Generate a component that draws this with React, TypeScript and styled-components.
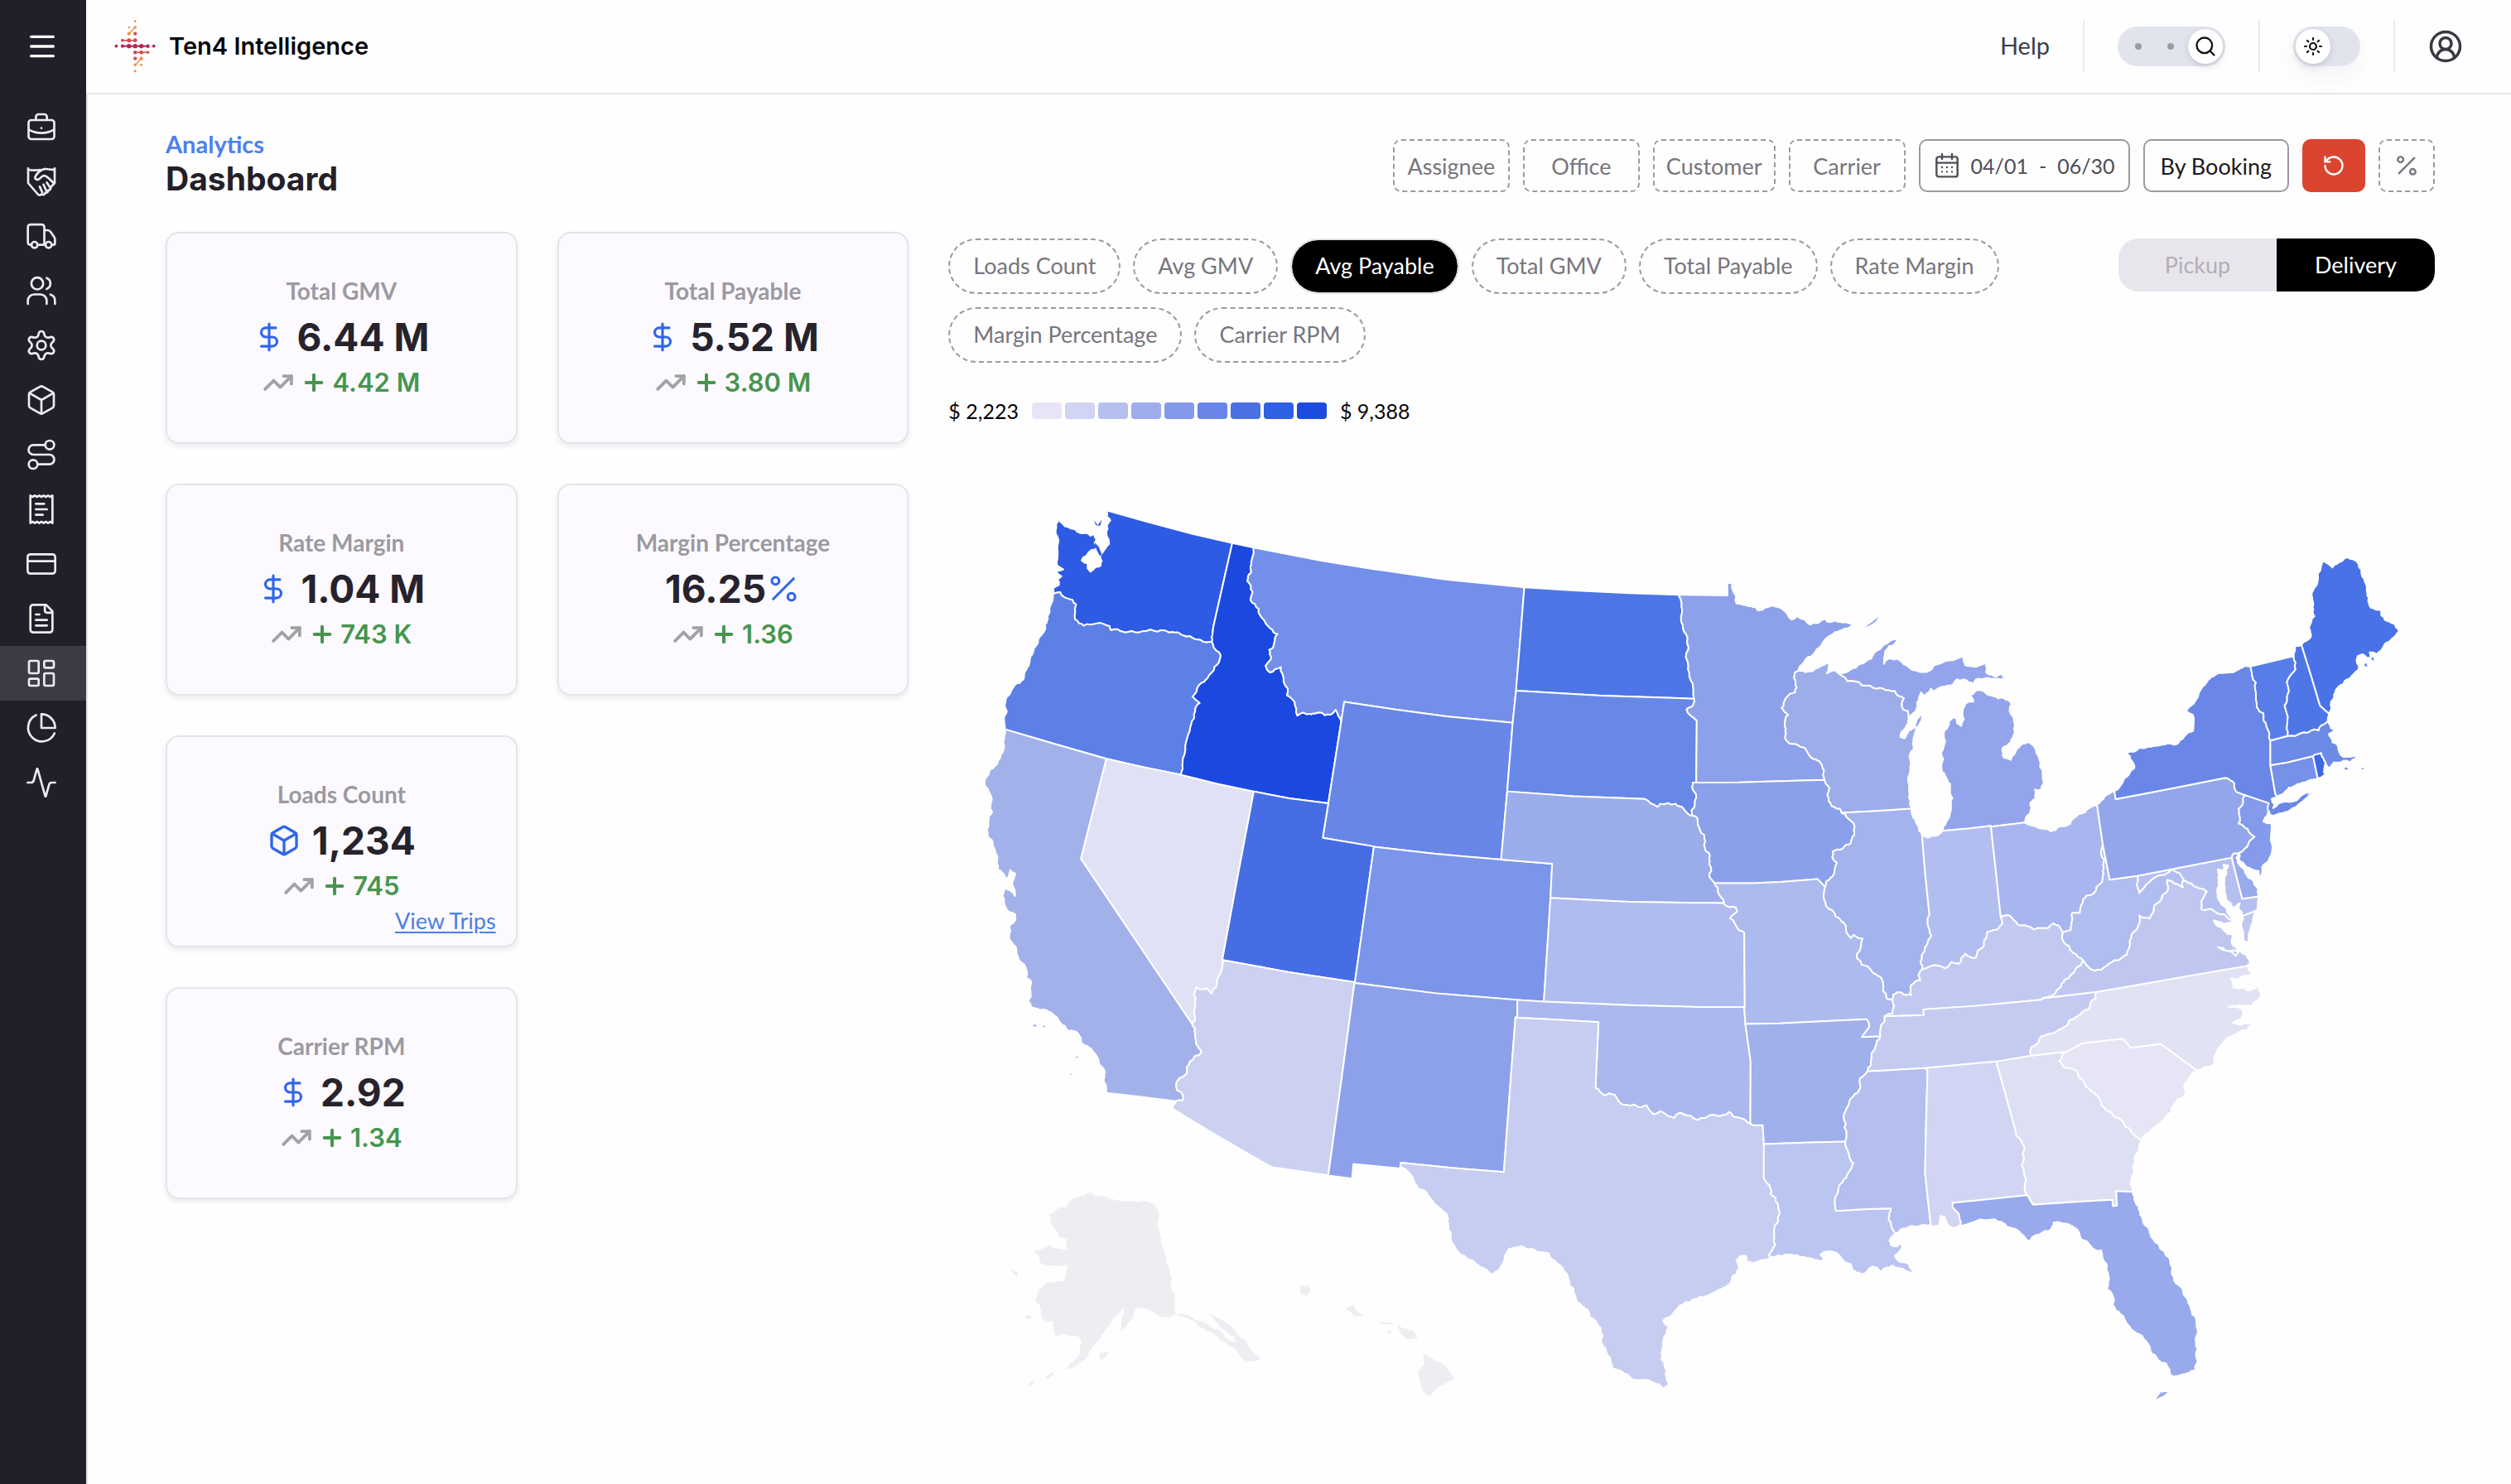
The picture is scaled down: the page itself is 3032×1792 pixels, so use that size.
import React, { useState } from "react";
import styled, { createGlobalStyle, css } from "styled-components";
import { Activity, Box, CircleUserRound, CreditCard, DollarSign, LayoutDashboard, Menu, Percent, Plus, RotateCcw, Search, Sun, TrendingUp } from "lucide-react";

const ui = `Lato, "Noto Sans", sans-serif`;
const display = `Inter, "Liberation Sans", sans-serif`;

const GlobalStyle = createGlobalStyle`
  * { box-sizing: border-box; }
  body { margin: 0; background: #fefefe; color: #232029; font-family: ${ui}; font-size: 27px; }
  button { font: inherit; color: inherit; cursor: pointer; background: none; border: 0; padding: 0; }
  svg { display: block; flex-shrink: 0; }
`;

/* ---------- shell ---------- */

const Page = styled.div`
  display: flex;
  min-height: 100vh;
`;

const Sidebar = styled.nav`
  width: 104px;
  flex-shrink: 0;
  background: #211f2a;
  color: #eceaf4;
  display: flex;
  flex-direction: column;
`;

const MenuButton = styled.button`
  height: 112px;
  padding-right: 2px;
  margin-bottom: 8px;
  display: grid;
  place-items: center;
`;

const NavLink = styled.a<{ $active?: boolean }>`
  height: 66px;
  padding-right: 4px;
  display: grid;
  place-items: center;
  color: inherit;
  background: ${(p) => (p.$active ? "#3c3a45" : "transparent")};
`;

const Body = styled.div`
  flex: 1;
  min-width: 0;
  display: flex;
  flex-direction: column;
`;

const Header = styled.header`
  height: 114px;
  padding: 0 58px 0 34px;
  border-bottom: 2px solid #e6e4ec;
  display: flex;
  align-items: center;
  justify-content: space-between;
`;

const Brand = styled.a`
  display: flex;
  align-items: center;
  gap: 16px;
  font: 600 29px/36px ${display};
  color: #08070b;
  text-decoration: none;
`;

const HeaderTools = styled.div`
  display: flex;
  align-items: center;
  gap: 40px;
`;

const HelpLink = styled.a`
  font-size: 29px;
  padding-bottom: 4px;
  color: #3e3c46;
  text-decoration: none;
`;

const Divider = styled.span`
  width: 2px;
  height: 64px;
  background: #ebe9f0;
`;

const track = css`
  height: 48px;
  padding: 0 3px;
  border-radius: 24px;
  background: #e2e4ed;
  display: flex;
  align-items: center;
`;

const SearchToggle = styled.button`
  ${track}
  width: 130px;
  padding-left: 21px;
  justify-content: space-between;
`;

const Dots = styled.span`
  display: flex;
  gap: 31px;
`;

const ThemeToggle = styled.label`
  ${track}
  width: 81px;
  cursor: pointer;
  box-shadow: 0 12px 24px rgba(60, 50, 90, 0.05);
  &:has(:checked) { justify-content: flex-end; }
`;

const HiddenInput = styled.input`
  position: absolute;
  opacity: 0;
  width: 1px;
  height: 1px;
  margin: 0;
`;

const Dot = styled.span`
  width: 8px;
  height: 8px;
  border-radius: 50%;
  background: #9b9ca8;
`;

const Thumb = styled.span`
  width: 42px;
  height: 42px;
  border-radius: 50%;
  background: #fff;
  color: #131217;
  display: grid;
  place-items: center;
  box-shadow: 0 3px 8px rgba(40, 36, 70, 0.16);
`;

const AccountButton = styled.button`
  color: #3a3843;
`;

/* ---------- page heading ---------- */

const Main = styled.main`
  flex: 1;
  border-left: 2px solid #e6e4ec;
  padding: 42px 92px 60px 94px;
`;

const Heading = styled.div`
  display: flex;
  align-items: center;
  justify-content: space-between;
  margin-bottom: 36px;
`;

const Titles = styled.div`
  padding-bottom: 4px;
`;

const Crumb = styled.p`
  margin: 0;
  font-size: 29px;
  line-height: 36px;
  font-weight: 700;
  color: #4b80f0;
`;

const Title = styled.h1`
  margin: 0;
  font: 700 39px/48px ${display};
`;

const Filters = styled.div`
  display: flex;
  gap: 16px;
`;

const FilterButton = styled.button<{ $solid?: boolean }>`
  height: 64px;
  min-width: ${(p) => (p.$solid ? "0" : "141px")};
  padding: 0 14px;
  border: 2px ${(p) => (p.$solid ? "solid" : "dashed")} #9c9aa1;
  border-radius: 10px;
  color: ${(p) => (p.$solid ? "#1b1920" : "#77757d")};
  display: flex;
  align-items: center;
  justify-content: center;
`;

const DateButton = styled(FilterButton)`
  padding: 0 16px;
  font-size: 25px;
  color: #4f4d56;
  gap: 13px;
`;

const BookingButton = styled(FilterButton)`
  padding: 0 19px;
`;

const ResetButton = styled.button`
  width: 76px;
  height: 64px;
  border-radius: 10px;
  background: #db4530;
  color: #fff;
  display: grid;
  place-items: center;
`;

const PercentButton = styled(FilterButton)`
  min-width: 0;
  width: 68px;
  padding: 0;
`;

/* ---------- metric cards ---------- */

const Content = styled.div`
  display: grid;
  grid-template-columns: minmax(0, 1fr) minmax(0, 2fr);
  gap: 48px;
`;

const Cards = styled.div`
  display: grid;
  grid-template-columns: repeat(2, minmax(0, 1fr));
  gap: 48px;
  align-content: start;
`;

const Card = styled.section<{ $rowStart?: boolean }>`
  ${(p) => p.$rowStart && "grid-column: 1;"}
  min-height: 256px;
  border: 2px solid #e6e4eb;
  border-radius: 16px;
  background: #fcfafe;
  box-shadow: 0 3px 6px rgba(40, 36, 60, 0.09);
  display: grid;
  grid-template-rows: minmax(0, 1fr) auto minmax(0, 1fr);
`;

const Metric = styled.div`
  grid-row: 2;
  padding-bottom: 4px;
  display: flex;
  flex-direction: column;
  align-items: center;
`;

const CardTitle = styled.h2`
  margin: 0;
  font-size: 28px;
  line-height: 48px;
  font-weight: 700;
  color: #9b99a1;
`;

const Value = styled.p<{ $gap: number }>`
  margin: 0;
  display: flex;
  align-items: center;
  gap: ${(p) => p.$gap}px;
  font: 700 46px/64px ${display};
  color: #26232c;
  svg { color: #2f66ea; }
`;

const Delta = styled.p`
  margin: 0;
  display: flex;
  align-items: center;
  gap: 6px;
  font: 600 31px/46px ${display};
  color: #47954e;
`;

const TrendIcon = styled(TrendingUp)`
  color: #a3a1a7;
  margin-right: 2px;
`;

const TripsLink = styled.a`
  grid-row: 3;
  align-self: end;
  justify-self: end;
  margin: 0 24px 16px;
  line-height: 28px;
  color: #4b7fe4;
  text-underline-offset: 3px;
`;

/* ---------- map panel ---------- */

const MapPanel = styled.section`
  padding-top: 8px;
`;

const MapControls = styled.div`
  display: flex;
  align-items: flex-start;
  justify-content: space-between;
  gap: 48px;
`;

const Pills = styled.div`
  flex: 1;
  display: flex;
  flex-wrap: wrap;
  gap: 16px 15px;
`;

const Pill = styled.button<{ $on: boolean }>`
  height: 67px;
  padding: 0 28px 2px;
  border-radius: 34px;
  border: 2px ${(p) => (p.$on ? "solid #e4e2e8" : "dashed #9c9aa1")};
  background: ${(p) => (p.$on ? "#000" : "transparent")};
  background-clip: padding-box;
  color: ${(p) => (p.$on ? "#fff" : "#77757d")};
`;

const Segmented = styled.fieldset`
  margin: 0;
  padding: 0;
  border: 0;
  width: 382px;
  height: 64px;
  border-radius: 24px;
  overflow: hidden;
  display: grid;
  grid-template-columns: 1fr 1fr;
  position: relative;
`;

const Segment = styled.label<{ $on: boolean }>`
  display: grid;
  place-items: center;
  padding-bottom: 2px;
  cursor: pointer;
  background: ${(p) => (p.$on ? "#000" : "#e8e6ec")};
  color: ${(p) => (p.$on ? "#fff" : "#b1aeb8")};
`;

const Legend = styled.div`
  margin-top: 42px;
  display: flex;
  align-items: center;
  gap: 16px;
  font-size: 25px;
  line-height: 32px;
  color: #08070b;
`;

const Swatches = styled.div`
  display: flex;
  gap: 4px;
`;

const Swatch = styled.span<{ $color: string }>`
  width: 36px;
  height: 20px;
  border-radius: 4px;
  background: ${(p) => p.$color};
`;

const MapSvg = styled.svg`
  width: 100%;
  height: auto;
  margin-top: 48px;
`;

/* ---------- map data ----------
   Borders are digitised on six tiles; every border is stored once and
   shared by the two states on its sides. */

type Point = [number, number];
const tiles: Record<string, [number, number, number, number]> = {
  W: [1180, 590, 3, 1.8233],
  M: [1600, 660, 3, 1.8667],
  N: [2000, 680, 3, 3],
  S: [2000, 1120, 3, 3],
  E: [2440, 650, 3, 2.1778],
  G: [1200, 1380, 1.04533, 3],
};

const straight: Record<string, string> = {
  waN: "W 468,48 620,74 780,100 924,120",
  orCa: "W 100,530 285,563 468,595",
  orNv: "W 468,595 600,613 737,630",
  idNv: "W 737,630 870,650 1002,667",
  idUt: "W 1002,667 1130,682 1272,693",
  idWy: "W 1272,693 1319,512",
  idN: "W 924,120 1002,130",
  mtN1: "W 1002,130 1250,159 1440,178",
  mtN2: "M 200,53 430,74 722,92",
  mtWy: "M 59,393 70,350 260,368 445,383 680,397",
  mtNd: "M 722,92 707,210 692,325",
  mtSd: "M 692,325 680,397",
  wySd: "M 680,397 660,552",
  wyNe: "M 660,552 638,706",
  wyUt: "W 1272,693 1252,769 1437,788",
  wyCo: "M 177,677 400,693 638,706",
  coNe: "M 638,706 823,715 817,792",
  coKs: "M 817,792 793,1026",
  coOk: "M 793,1026 697,1022",
  coNm: "M 697,1022 400,1007 108,984",
  coUt: "M 177,677 108,984",
  utNv: "W 1002,667 945,850 888,1038",
  utAz: "W 888,1038 1130,1065 1367,1087",
  nvCa: "W 468,595 376,815 778,1178",
  caS: "W 720,1349 600,1340 468,1331",
  azS: "W 720,1349 705,1365 850,1418 1065,1494 1272,1512",
  azNm: "W 1367,1087 1320,1300 1272,1512",
  nmS: "M 13,1418 98,1425 103,1392 272,1402",
  nmOk: "M 697,1022 697,1058 690,1062",
  nmTx: "M 690,1062 668,1240 648,1410 460,1401 275,1389 272,1402",
  okTxN: "M 690,1062 850,1067 991,1072 980,1220",
  okAr: "S 323,350 342,485 341,710",
  okMo: "S 319,287 323,350",
  ksOk: "M 793,1026 1100,1034 1350,1038 1521,1038",
  ksMoS: "M 1519,870 1521,1038",
  neKs: "M 817,792 1100,801 1443,804",
  sdNeW: "M 660,552 900,563 1158,569",
  sdMnS: "N 133,795 145,795 147,570",
  mnIa: "N 133,795 300,794 450,790 610,785",
  ndSd: "M 692,325 1000,336 1336,343",
  ndN: "M 722,92 900,99 1100,105 1283,109",
  mnAngle: "N 82,115 258,117 258,72 276,72",
  iaMo: "N 212,1160 350,1160 450,1155 585,1145 612,1173",
  moAr: "S 812,395 745,397 772,360 770,345 762,333 600,340 450,348 323,350",
  arLa: "S 685,776 540,780 390,785",
  txAr: "S 341,710 350,716 386,717 390,785",
  txLaN: "S 390,785 390,910",
  laMsS: "S 652,1027 750,1021 850,1018",
  msAl: "S 975,510 983,520 978,700 974,890 985,990 995,1082",
  tnMs: "S 765,522 870,516 975,510",
  tnAl: "S 975,510 1100,498 1232,486",
  tnGa: "S 1232,486 1358,465",
  alFlN: "S 1075,998 1200,985 1345,970",
  alGaN: "S 1232,486 1260,585 1303,740",
  gaFl: "S 1345,970 1365,1005 1560,992",
  gaFlE: "G 1412,207 1413,230 1418,228 1417,175 1438,178",
  gaNc: "S 1358,465 1490,450",
  ncSc: "E 168,1350 225,1328 370,1316 400,1340 508,1330 640,1400",
  ncVa: "E 818,1125 600,1152 400,1178 275,1193",
  vaTn: "E 275,1193 80,1210",
  kyTn: "S 828,322 970,318 968,297 1150,285 1270,274 1395,262",
  ohIn: "N 1213,955 1230,1110 1248,1280",
  ilInN: "N 963,985 975,1130 990,1275",
  wiIl: "N 672,905 800,898 925,890",
  miIn: "N 1038,970 1130,962 1213,952",
  miOh: "N 1213,955 1335,940",
  ohPa: "E 277,700 298,805",
  paWv: "E 298,805 323,898 422,888",
  paMd: "E 422,888 600,863 765,840",
  paNyW: "E 742,630 550,658 345,686 340,665",
  nyMa: "E 905,532 905,597",
  nyCt: "E 905,597 923,672 930,680",
  nyNj: "E 900,697 812,675",
  deMd: "E 765,840 803,948 862,942",
  mdSea: "E 862,942 858,978",
  mdVaE: "E 858,978 805,993",
  vtN: "E 833,337 990,310",
  vtMa: "E 905,532 967,520",
  nhMe: "E 1018,280 1050,355 1085,440 1118,462",
  maCt: "E 905,597 965,590 1060,573",
  ctRi: "E 1060,573 1077,632",
  waId: "W 924,120 856,303",
};

const rough: Record<string, string> = {
  waCoast: "W 275,232 275,219 296,212 290,200 305,193 286,181 312,178 290,170 292,140 290,105 284,92 296,66 330,85 375,98 410,104 425,100 432,112 425,120 440,125 415,135 395,148 378,158 400,165 400,176 410,183 430,172 447,170 445,150 455,140 472,125 478,122 470,105 468,95 482,70 470,62 468,48",
  waIdS: "W 856,303 853,318 850,337",
  waOr: "W 275,232 300,228 318,240 345,245 358,255 354,288 385,302 432,297 480,303 485,312 510,310 545,316 600,314 630,311 655,315 685,314 770,325 850,337",
  orCoast: "W 275,232 262,262 245,300 215,345 180,395 155,428 135,433 103,465 107,490 97,508 100,530",
  orId: "W 850,337 857,350 875,360 882,370 860,392 835,417 805,432 780,458 806,472 790,490 775,520 737,630",
  idMt: "W 1002,130 978,203 998,228 990,245 1020,265 1040,290 1062,308 1088,320 1072,350 1058,355 1065,375 1045,390 1060,405 1100,393 1110,425 1125,440 1122,455 1150,470 1160,500 1180,493 1210,497 1240,493 1280,498 1298,487 1319,512",
  nvAz: "W 888,1038 866,1098 850,1112 832,1100 793,1098 790,1165 778,1178",
  caAz: "W 778,1178 790,1200 792,1222 813,1242 770,1262 760,1288 728,1302 725,1325 745,1335 745,1347 720,1349",
  caCoast: "W 100,530 97,545 97,572 75,600 28,640 28,655 53,685 54,712 40,735 38,765 72,808 75,840 90,845 105,860 120,840 138,848 128,865 137,897 120,885 97,880 97,912 118,933 137,937 138,950 116,965 116,985 140,1010 150,1037 180,1063 178,1078 195,1085 185,1130 195,1141 240,1147 275,1158 300,1175 330,1195 365,1200 378,1222 400,1228 440,1260 463,1285 468,1331",
  okTxS: "M 980,1220 1010,1237 1050,1236 1065,1252 1120,1258 1135,1264 1165,1260 1190,1280 1215,1273 1240,1283 1265,1288 1285,1277 1320,1283 1350,1293 1400,1281 1440,1282 1465,1275 1495,1287 1543,1302",
  ksMoN: "M 1443,804 1465,813 1490,815 1493,823 1468,838 1485,850 1500,865 1519,870",
  neMo: "N 245,1230 225,1195 212,1160",
  neIa: "N 130,915 150,925 158,965 178,1010 178,1040 192,1050 192,1090 200,1110 195,1140 212,1160",
  sdNeE: "M 1158,569 1205,587 1215,580 1270,580 1300,592 1332,607",
  sdIa: "N 130,915 128,895 145,850 135,825 133,795",
  sdMnN: "N 147,570 122,550 110,530 135,510 137,492",
  ndMn: "N 82,115 92,145 90,195 97,235 112,285 115,360 120,410 133,445 137,492",
  mnN: "N 276,72 290,120 290,145 325,152 360,160 370,172 400,160 430,157 455,165 475,185 490,205 510,190 540,205 558,223 590,215 612,202 620,212 660,213 690,215 712,223",
  mnLake: "N 712,223 640,258 600,295 570,330 535,360 515,390",
  mnWi: "N 515,390 502,397 503,468 470,488 455,525 478,550 467,570 470,600 467,635 490,655 515,660 545,680 555,697 600,730 608,750 610,785",
  iaWi: "N 610,785 615,800 628,815 620,840 635,880 665,890 672,905",
  iaIl: "N 672,905 695,925 718,950 718,985 705,1015 675,1035 640,1045 638,1065 655,1085 640,1135 615,1155 612,1173",
  moIlN: "N 612,1173 607,1200 615,1240 650,1280 688,1315 690,1340 705,1358 715,1347 748,1360",
  moIlS: "S 747,42 742,70 728,95 728,112 745,135 780,157 810,178 822,205 822,230 838,260 855,262",
  moKy: "S 855,262 862,285 855,312 828,322",
  moTn: "S 828,322 828,340 812,370 812,395",
  arTn: "S 812,395 795,430 780,460 778,500 765,522",
  arMs: "S 765,522 740,545 735,590 705,620 690,655 680,690 682,725 690,750 685,776",
  txLaS: "S 390,910 412,935 415,965 440,1000 448,1035 440,1070 428,1090 432,1150 407,1188 415,1193",
  laMsN: "S 685,776 690,800 700,825 715,855 700,885 675,925 660,950 648,995 652,1027",
  laMsE: "S 850,1018 842,1055 868,1110",
  laCoast: "S 868,1110 845,1135 850,1150 875,1155 885,1140 892,1158 885,1170 865,1190 885,1212 915,1220 930,1245 925,1255 905,1245 880,1235 855,1225 835,1232 815,1250 800,1232 785,1228 765,1245 745,1257 725,1250 710,1240 705,1220 680,1210 665,1190 640,1175 610,1175 595,1185 610,1205 575,1205 540,1195 510,1187 470,1185 415,1193",
  txCoastN: "S 415,1193 380,1205 350,1217 325,1210 325,1190 305,1190 290,1205 300,1235 290,1258 275,1265 270,1285 245,1305 215,1320",
  txCoastS: "G 911,540 873,578 860,610 845,645 852,665 845,720 843,785 848,840 852,878 845,892 832,868 812,860 795,835 782,820 775,770 768,730 766,670 752,630 738,580 732,530 725,490 715,445 700,400 680,385 665,375 650,385 645,410 640,450 630,478 618,455 600,425 583,385 577,330 573,270 560,230 548,190 532,150 523,105 513,90",
  msCoast: "S 868,1110 885,1095 905,1090 935,1083 995,1082",
  alCoast: "S 995,1082 1025,1080 1030,1045 1045,1050 1055,1075 1075,1088 1100,1080",
  alFlW: "S 1100,1080 1105,1068 1098,1045 1075,1015 1075,998",
  alGaS: "S 1303,740 1335,800 1325,865 1335,900 1335,950 1345,970",
  flGulf: "S 1100,1080 1150,1068 1200,1060 1250,1067 1300,1092 1330,1115 1345,1135 1355,1135 1400,1105 1435,1085 1440,1070 1480,1072 1520,1090 1540,1130 1560,1137",
  flCoast: "G 1388,385 1398,390 1405,440 1407,480 1405,530 1412,550 1413,590 1422,620 1432,660 1442,690 1455,720 1462,765 1480,800 1487,845 1500,840 1517,825 1520,750 1518,640 1505,560 1487,475 1485,430 1460,330 1447,250 1438,178",
  gaCoast: "G 1438,178 1435,150 1440,110 1440,60 1446,30 1448,0",
  gaSc: "E 168,1350 155,1355 140,1375 160,1392 195,1397 235,1440 290,1480 330,1510 365,1530 380,1548 405,1565 435,1583",
  scCoast: "E 640,1400 615,1415 595,1435 590,1470 555,1490 545,1510 510,1535 475,1555 460,1565 435,1583",
  ncCoast: "E 640,1400 665,1392 698,1386 705,1360 730,1330 765,1310 820,1293 838,1275 800,1280 770,1275 800,1265 805,1240 755,1233 840,1233 860,1215 873,1200 860,1178 825,1190 805,1180 770,1182 762,1158 790,1160 840,1145 818,1125",
  ncTn: "E 275,1193 272,1210 245,1240 205,1258 175,1270 150,1290 110,1303 75,1310 60,1330 38,1340 38,1360",
  kyVa: "S 1395,262 1445,240 1480,190 1520,150 1548,120",
  kyWv: "E 228,1111 190,1090 155,1060 152,1038",
  kyOh: "N 1475,1340 1465,1325 1440,1305 1420,1322 1370,1328 1335,1312 1310,1310 1285,1280 1248,1280",
  inKyN: "N 1248,1280 1255,1305 1235,1328 1200,1335 1195,1360",
  inKyS: "S 1195,40 1185,70 1165,85 1158,110 1120,95 1100,130 1070,125 1045,148 1020,138 995,140 965,150",
  ilKy: "S 965,150 950,175 957,192 925,208 925,245 905,245 875,235 858,245 855,262",
  ilInS: "N 990,1275 983,1300 997,1350 980,1385 965,1415 958,1450 965,1470",
  ilLake: "N 925,890 927,910 948,950 963,985",
  inLake: "N 963,985 985,995 1010,988 1038,970",
  miCoast: "N 1335,940 1340,920 1355,905 1355,870 1375,850 1372,820 1395,820 1403,800 1400,765 1388,710 1370,665 1350,648 1325,655 1305,675 1285,713 1260,705 1255,670 1285,650 1300,615 1295,560 1280,535 1288,510 1260,490 1220,482 1190,465 1160,462 1135,480 1150,502 1120,510 1110,530 1115,565 1105,590 1090,580 1085,560 1060,575 1045,605 1048,645 1033,685 1040,710 1033,738 1065,800 1073,850 1068,895 1050,940 1038,970",
  wiMi: "N 665,403 685,415 692,427 800,455 865,463 875,480 898,490 895,530 912,535 915,563",
  upCoast: "N 665,403 705,385 740,365 780,345 820,300 850,280 878,276 845,300 825,345 825,365 845,345 880,350 915,378 945,390 990,390 1025,365 1075,352 1115,340 1120,370 1160,375 1195,360 1195,395 1225,410 1255,408 1240,420 1160,420 1150,437 1120,422 1090,420 1075,440 1035,448 1005,470 995,455 975,480 960,468 945,505 930,545 915,563",
  wiN: "N 515,390 540,395 590,378 625,358 618,400 645,388 665,403",
  wiLake: "N 915,563 912,580 890,610 885,630 900,635 915,605 945,590 965,550 962,570 940,610 932,635 932,675 920,690 920,740 912,780 917,830 925,890",
  ohLake: "N 1335,940 1385,960 1430,972 1460,955 1500,945 1530,910 1560,893",
  ohLakeE: "E 240,713 277,700",
  ohWv: "E 298,805 292,822 303,845 295,905 265,935 240,940 220,965 215,985 188,985 183,1030 152,1038",
  paDe: "E 765,840 775,828 793,827",
  paNj: "E 793,827 820,813 848,785 790,750 795,735 790,712 805,700 812,675",
  paNyE: "E 812,675 780,665 775,645 742,630",
  paLake: "E 340,665 277,700",
  nyN: "E 340,665 365,648 412,605 385,565 430,551 500,545 560,543 595,520 625,507 625,465 600,455 635,425 660,390 705,360 760,353 833,337",
  nyVt: "E 833,337 838,360 853,380 853,405 865,455 880,460 905,532",
  nyIsland: "E 930,680 910,685 920,700 915,710 960,692 1000,690 1040,668 1060,667 1010,697 960,720 915,730 903,727 900,697",
  njCoast: "E 900,697 895,728 880,745 908,750 913,810 900,845 875,865 868,892 863,875 820,865 790,845 793,827",
  deCoast: "E 862,942 858,918 820,885 800,865 782,840 793,827",
  vaShore: "E 858,978 835,1020 825,1065 808,1060 805,993",
  bay: "E 805,993 790,975 795,960 765,970 745,950 740,915 745,885 752,860 735,858 735,875 715,870 718,900 712,925 730,965 755,990 770,1010",
  potomac: "E 770,1010 740,990 710,985 690,975 655,975 655,955 675,930 660,922 640,918 620,908 590,900",
  mdWv: "E 590,897 575,880 545,872 520,885 490,890 465,905 430,933 422,888",
  vaWv: "E 590,897 588,918 532,898 530,930 505,955 485,965 468,1000 430,992 420,1030 395,1060 385,1095 340,1110 310,1125 270,1137 228,1111",
  vaCoast: "E 770,1010 730,1012 700,1005 735,1030 770,1045 765,1065 790,1085 780,1098 715,1075 760,1085 820,1095 835,1120 818,1125",
  vtNh: "E 990,310 997,345 965,378 968,410 957,440 967,480 967,520",
  nhN: "E 990,310 995,283 1018,280",
  nhMa: "E 967,520 1080,505 1090,492 1112,482",
  nhCoast: "E 1118,462 1112,482",
  meCoast: "E 1018,280 1035,270 1050,262 1045,235 1065,205 1058,180 1065,130 1100,58 1130,77 1165,60 1183,50 1225,68 1255,130 1270,183 1305,188 1320,215 1355,225 1372,242 1350,262 1320,278 1290,305 1265,300 1270,318 1240,305 1222,310 1225,345 1200,362 1170,383 1140,405 1125,430 1118,462",
  maRi: "E 1060,573 1090,565 1105,590",
  maCoast: "E 1112,482 1125,500 1138,502 1117,515 1130,537 1150,545 1170,575 1195,575 1230,568 1195,590 1170,585 1160,590 1135,590 1120,605 1105,590",
  ctCoast: "E 930,680 960,665 1020,643 1077,632",
  riCoast: "E 1077,632 1103,622 1105,590",
  ak: "G 122,178 112,195 97,205 90,235 70,262 75,305 82,345 92,350 92,388 70,370 52,390 60,440 92,440 90,500 65,510 52,570 62,640 75,650 78,700 100,698 110,712 108,765 95,800 85,830 100,815 120,760 133,715 140,680 150,640 165,595 162,640 160,680 175,640 180,600 195,605 215,632 230,622 245,625 265,650 285,680 300,720 325,750 337,785 322,795 300,740 275,690 255,650 240,632 230,622",
  akE: "G 230,622 203,225 185,212 155,210 130,195 122,178",
};

const islands: Record<string, string[]> = {
  CA: ["W 200,1182 210,1186 216,1182 208,1180", "W 234,1184 248,1187 242,1182", "W 354,1252 368,1254 362,1250", "W 336,1289 342,1293 340,1288"],
  MI: ["N 756,232 783,213 805,195 797,210 775,225", "N 1236,410 1250,404 1258,418 1242,417", "N 940,590 948,566 962,552 956,572 946,592"],
  WA: ["W 422,70 437,80 452,68 445,82 430,80", "W 425,118 440,128 452,146 444,148 432,134"],
  MA: ["E 1172,607 1188,608 1180,602", "E 1234,606 1244,608 1240,603"],
  ME: ["E 1245,335 1252,328 1256,338", "E 1270,318 1278,312 1280,322"],
  NY: ["E 925,722 1000,702 1058,668 1010,690 950,702 918,712"],
  FL: ["G 1467,930 1473,905 1482,903 1478,915"],
  AK: ["G 20,458 30,470 30,488 26,478", "G 38,630 46,625 48,638 42,638", "G 133,765 145,755 142,775 135,790", "G 65,850 74,830 76,840 68,855", "G 44,875 52,855 50,870 46,885", "G 273,620 290,645 302,670 312,708 300,700 285,665", "G 300,690 318,715 326,760 318,760 308,725"],
  HI: ["G 387,520 398,518 400,540 395,556 387,545", "G 445,600 454,588 458,608 466,628 456,630", "G 484,648 504,654 500,660 488,656", "G 496,685 503,680 500,695", "G 508,656 516,672 530,682 535,708 522,714 514,692", "G 542,765 570,808 582,855 560,888 550,920 541,900 535,830 544,800"],
};

const states: Record<string, [string, string]> = {
  WA: ["#2e5be4", "waCoast waN waId waIdS waOr"],
  OR: ["#5d80e7", "orCoast waOr orId orNv orCa"],
  CA: ["#a3b1eb", "caCoast orCa nvCa caAz caS"],
  NV: ["#e1e1f5", "nvCa orNv idNv utNv nvAz"],
  ID: ["#1b49e0", "idN idMt idWy idUt idNv orId waIdS waId"],
  MT: ["#738fe9", "mtN1 mtN2 mtNd mtSd mtWy idMt"],
  WY: ["#6886e7", "mtWy wySd wyNe wyCo wyUt idWy"],
  UT: ["#466de4", "idUt wyUt coUt utAz utNv"],
  CO: ["#7b95ea", "wyCo coNe coKs coOk coNm coUt"],
  AZ: ["#ccd0f1", "utAz azNm azS caAz nvAz"],
  NM: ["#8da1eb", "coNm nmOk nmTx nmS azNm"],
  ND: ["#4d75e6", "ndN ndMn ndSd mtNd"],
  SD: ["#6888e8", "ndSd sdMnN sdMnS sdIa sdNeE sdNeW wySd mtSd"],
  NE: ["#9bacea", "sdNeW sdNeE neIa neMo neKs coNe wyNe"],
  KS: ["#b0bbef", "neKs ksMoN ksMoS ksOk coKs"],
  OK: ["#aab8ee", "ksOk okMo okAr okTxS okTxN nmOk coOk"],
  TX: ["#c6cdf1", "okTxN okTxS txAr txLaN txLaS txCoastN txCoastS nmTx"],
  MN: ["#8da1ea", "mnAngle mnN mnLake mnWi mnIa sdMnS sdMnN ndMn"],
  IA: ["#8aa0ea", "mnIa iaWi iaIl iaMo neIa sdIa"],
  MO: ["#adbaed", "iaMo moIlN moIlS moKy moTn moAr okMo ksMoS ksMoN neMo"],
  AR: ["#9fb0eb", "moAr arTn arMs arLa txAr okAr"],
  LA: ["#bbc5f1", "arLa laMsN laMsS laMsE laCoast txLaS txLaN"],
  WI: ["#9cadea", "wiN wiMi wiLake wiIl iaWi mnWi"],
  IL: ["#a4b2ed", "wiIl ilLake ilInN ilInS ilKy moIlS moIlN iaIl"],
  MI: ["#93a4ec", "miCoast miIn miOh|upCoast wiMi"],
  IN: ["#b2bef0", "inLake miIn ohIn inKyN inKyS ilInS ilInN"],
  OH: ["#a8b5ef", "miOh ohLake ohLakeE ohPa ohWv kyOh ohIn"],
  KY: ["#c2c9f1", "moKy kyTn kyVa kyWv kyOh inKyN inKyS ilKy"],
  TN: ["#c5cbf0", "kyTn vaTn ncTn tnGa tnAl tnMs arTn moTn"],
  MS: ["#b4bff0", "tnMs msAl msCoast laMsE laMsS laMsN arMs"],
  AL: ["#d1d5f3", "tnAl alGaN alGaS alFlN alFlW alCoast msAl"],
  GA: ["#dddff3", "tnGa gaNc gaSc gaCoast gaFlE gaFl alGaS alGaN"],
  FL: ["#98a9ec", "alFlW alFlN gaFl gaFlE flCoast flGulf"],
  SC: ["#e6e5f6", "ncSc scCoast gaSc"],
  NC: ["#e2e2f5", "ncVa ncCoast ncSc gaNc ncTn"],
  VA: ["#bfc7f0", "ncVa vaTn kyVa vaWv potomac vaCoast|mdVaE vaShore"],
  WV: ["#b0bdef", "paWv mdWv vaWv kyWv ohWv"],
  MD: ["#b5c0f0", "paMd deMd mdSea mdVaE bay potomac mdWv"],
  DE: ["#98abec", "deMd deCoast paDe"],
  PA: ["#93a6eb", "ohPa paWv paMd paDe paNj paNyE paNyW paLake"],
  NJ: ["#849beb", "nyNj njCoast paNj"],
  NY: ["#6a87e8", "nyN nyVt nyMa nyCt nyIsland nyNj paNyE paNyW"],
  CT: ["#7591e8", "maCt ctRi ctCoast nyCt"],
  RI: ["#3f68e5", "maRi riCoast ctRi"],
  MA: ["#6c8be8", "vtMa nhMa maCoast maRi maCt nyMa"],
  VT: ["#587de8", "vtN vtNh vtMa nyVt"],
  NH: ["#4f76e7", "nhN nhMe nhCoast nhMa vtNh"],
  ME: ["#4a72e7", "meCoast nhMe"],
  AK: ["#efedf1", "ak akE"],
  HI: ["#efedf1", ""],
};

const decode = (line: string): Point[] => {
  const [tile, ...pairs] = line.split(" ");
  const [ox, oy, sx, sy] = tiles[tile];
  return pairs.map((pair) => {
    const [x, y] = pair.split(",").map(Number);
    return [ox + x / sx, oy + y / sy];
  });
};

const distance = (a: Point, b: Point) => Math.hypot(a[0] - b[0], a[1] - b[1]);

/* Repeatable noise in -1..1, so a shoreline looks the same on every render. */
const noise = (x: number, y: number) => {
  const v = Math.sin(x * 12.9898 + y * 78.233) * 43758.5453;
  return (v - Math.floor(v)) * 2 - 1;
};

/* Breaks long river and shore segments into small meanders. */
const meander = (a: Point, b: Point): Point[] => {
  const length = distance(a, b);
  if (length < 5) return [b];
  const shift = (noise(a[0] + b[0], a[1] + b[1]) * Math.min(length, 14) * 0.16) / length;
  const mid: Point = [(a[0] + b[0]) / 2 - (b[1] - a[1]) * shift, (a[1] + b[1]) / 2 + (b[0] - a[0]) * shift];
  return [...meander(a, mid), ...meander(mid, b)];
};

const borders: Record<string, Point[]> = {};
Object.entries(straight).forEach(([name, line]) => {
  borders[name] = decode(line);
});
Object.entries(rough).forEach(([name, line]) => {
  const points = decode(line);
  borders[name] = points.slice(1).reduce<Point[]>((out, p, i) => [...out, ...meander(points[i], p)], [points[0]]);
});

/* Chains borders into one ring, turning each one to start where the last ended. */
const ring = (names: string[]): Point[] => {
  const lines = names.map((name) => borders[name]);
  const ends = [lines[1][0], lines[1][lines[1].length - 1]];
  const gap = (p: Point) => Math.min(...ends.map((e) => distance(p, e)));
  const first = lines[0];
  const out = gap(first[first.length - 1]) <= gap(first[0]) ? [...first] : [...first].reverse();
  lines.slice(1).forEach((line) => {
    const tail = out[out.length - 1];
    const forward = distance(tail, line[0]) <= distance(tail, line[line.length - 1]);
    out.push(...(forward ? line : [...line].reverse()));
  });
  return out;
};

const toPath = (points: Point[]) => `M${points.map(([x, y]) => `${x.toFixed(1)} ${y.toFixed(1)}`).join("L")}Z`;

const shapes = Object.entries(states).map(([id, [fill, rings]]) => ({
  id,
  fill,
  mainland: rings.split("|").filter(Boolean).map((names) => toPath(ring(names.split(" ")))).join(""),
  offshore: (islands[id] ?? []).map((line) => toPath(decode(line))).join(""),
}));

const UsMap = () => (
  <MapSvg viewBox="1145 560 1795 1150" role="img" aria-label="Avg Payable by state">
    {shapes.map(({ id, fill, mainland }) => (
      <path key={id} d={mainland} fill={fill} stroke={id === "AK" ? "none" : "#fff"} strokeWidth={2} strokeLinejoin="round" />
    ))}
    {shapes.map(({ id, fill, offshore }) => offshore && <path key={id} d={offshore} fill={fill} />)}
  </MapSvg>
);

/* ---------- icons ---------- */

const Line = ({ size = 40, width = 1.6, children }: { size?: number; width?: number; children: React.ReactNode }) => (
  <svg width={size} height={size} viewBox="0 0 24 24" fill="none" stroke="currentColor" strokeWidth={width} strokeLinecap="round" strokeLinejoin="round" aria-hidden>
    {children}
  </svg>
);

const Briefcase = () => (
  <Line>
    <rect x="2.7" y="7.2" width="18.6" height="13.8" rx="2" />
    <path d="M8 7V5a2 2 0 0 1 2-2h4a2 2 0 0 1 2 2v2M12 13v.01M3 14.2c5.5 3.2 12.5 3.2 18 0" />
  </Line>
);

const Handshake = () => (
  <Line>
    <path d="M2.4 2.6v10.6l7 8.1c.8.9 2 .8 2.7 0 1 .7 2.4.3 2.7-1 1.2.2 2.2-.7 2.2-1.9 1.2 0 2-1 1.7-2.1l2.9-3.1V2.6" />
    <path d="M2.4 3.4c3 .9 5.5.6 8.6.3M21.6 3.4c-2.6.7-5-.8-7.5-.3-2.8.6-4.7 2.3-6.4 5.2-.8 1.6.6 2.9 2.1 2.3 1.6-.6 2-2.4 4-2.7 2.2-.2 4.9 3.4 7.4 5.6" />
    <path d="M10.8 15.8l1.9 4.2M13.5 14.3l2 4.5M15.9 12.8l2.5 3.8" />
  </Line>
);

const Truck = () => (
  <Line>
    <path d="M4.8 18.4H4a1.8 1.8 0 0 1-1.8-1.8V5.5A1.8 1.8 0 0 1 4 3.7h8.3a1.8 1.8 0 0 1 1.8 1.8v12.9M9.3 18.4h5.5M14.1 7.8h2.2c1 0 1.8.4 2.4 1.2l2.6 3.8c.3.4.5 1 .5 1.5v3.1a1 1 0 0 1-1 1h-1.3" />
    <circle cx="7" cy="18.4" r="2.2" />
    <circle cx="17.2" cy="18.4" r="2.2" />
  </Line>
);

const People = () => (
  <Line>
    <circle cx="9" cy="6.8" r="4.3" />
    <path d="M2.2 21.6v-2.4a4.5 4.5 0 0 1 4.5-4.5h4.6a4.5 4.5 0 0 1 4.5 4.5v2.4M15.8 2.8a4.3 4.3 0 0 1 0 8M18.5 14.8a4.5 4.5 0 0 1 3.3 4.4v2.4" />
  </Line>
);

const Gear = () => (
  <Line>
    <circle cx="12" cy="12" r="3.2" />
    <path d="M10.1 3.2a2 2 0 0 1 3.8 0Q14.5 7.65 18.67 5.95a2 2 0 0 1 1.9 3.3Q17.02 12 20.57 14.75a2 2 0 0 1-1.9 3.3Q14.5 16.35 13.9 20.8a2 2 0 0 1-3.8 0Q9.5 16.35 5.33 18.05a2 2 0 0 1-1.9-3.3Q6.98 12 3.43 9.25a2 2 0 0 1 1.9-3.3Q9.5 7.65 10.1 3.2Z" />
  </Line>
);

const RouteIcon = () => (
  <Line>
    <circle cx="18" cy="5" r="3.2" />
    <circle cx="6" cy="19" r="3.2" />
    <path d="M14.8 5H6.2a3.5 3.5 0 0 0 0 7h11.6a3.5 3.5 0 0 1 0 7H9.2" />
  </Line>
);

const Receipt = () => (
  <Line>
    <path d="M4 2l1.6 1 1.6-1 1.6 1 1.6-1L12 3l1.6-1 1.6 1 1.6-1 1.6 1L20 2v20l-1.6-1-1.6 1-1.6-1-1.6 1-1.6-1-1.6 1-1.6-1-1.6 1-1.6-1L4 22ZM8 8h6M8 12h8M8 16h5" />
  </Line>
);

const Doc = () => (
  <Line>
    <path d="M15.5 2H6a2 2 0 0 0-2 2v16a2 2 0 0 0 2 2h12a2 2 0 0 0 2-2V6.7ZM14.5 2.2v4a1.5 1.5 0 0 0 1.5 1.5h3.8M8 9h2.5M8 13h8M8 17h8" />
  </Line>
);

const Pie = () => (
  <Line>
    <path d="M21.5 15.9A10 10 0 1 1 8.2 2.7M22 12A10 10 0 0 0 12 2v10Z" />
  </Line>
);

const CalendarIcon = () => (
  <Line size={32} width={1.8}>
    <rect x="2.5" y="4" width="19" height="18" rx="2" />
    <path d="M7.5 1.5V6M16.5 1.5V6M2.5 9.5h19M7.5 13.5v.01M12 13.5v.01M16.5 13.5v.01M7.5 17.5v.01M12 17.5v.01M16.5 17.5v.01" />
  </Line>
);

const Logo = () => (
  <svg width="50" height="66" viewBox="0 0 50 66" aria-hidden>
    <g fill="#e8924e" stroke="#e8924e">
      <path d="M17.7 17.7 25.2 10M32.7 47.7 25.2 55.3" strokeWidth="1.5" />
      <g stroke="none">
        <circle cx="25.2" cy="2.7" r="1.4" />
        <circle cx="17.7" cy="10" r="1.3" />
        <circle cx="25.2" cy="10" r="1.8" />
        <circle cx="17.7" cy="17.7" r="2.1" />
        <circle cx="32.7" cy="47.7" r="2.1" />
        <circle cx="25.2" cy="55.3" r="1.8" />
        <circle cx="32.7" cy="55.3" r="1.4" />
        <circle cx="25.2" cy="63" r="1.4" />
      </g>
    </g>
    <g fill="#d54a4b" stroke="#d54a4b">
      <path d="M9.9 25.7H25.2M25.2 40.3H40.6" strokeWidth="1.5" />
      <g stroke="none">
        <circle cx="25.2" cy="17.7" r="2.1" />
        <circle cx="9.9" cy="25.7" r="1.9" />
        <circle cx="17.7" cy="25.7" r="2.5" />
        <circle cx="25.2" cy="25.7" r="2.4" />
        <circle cx="25.2" cy="40.3" r="2.2" />
        <circle cx="32.7" cy="40.3" r="2.4" />
        <circle cx="40.6" cy="40.3" r="1.7" />
        <circle cx="25.2" cy="47.7" r="2.1" />
      </g>
    </g>
    <g fill="#b9254f" stroke="#b9254f">
      <path d="M9.9 32.7H40.6" strokeWidth="2" />
      <g stroke="none">
        <circle cx="2.4" cy="32.7" r="1.9" />
        <circle cx="9.9" cy="32.7" r="2.1" />
        <circle cx="17.7" cy="32.7" r="2.6" />
        <circle cx="25.2" cy="32.7" r="2.6" />
        <circle cx="32.7" cy="32.7" r="2.6" />
        <circle cx="40.6" cy="32.7" r="2.2" />
        <circle cx="47.7" cy="32.7" r="1.9" />
      </g>
    </g>
  </svg>
);

/* ---------- content ---------- */

const nav: [string, React.ReactNode][] = [
  ["Jobs", <Briefcase />],
  ["Partners", <Handshake />],
  ["Carriers", <Truck />],
  ["People", <People />],
  ["Settings", <Gear />],
  ["Loads", <Box size={40} strokeWidth={1.6} />],
  ["Routes", <RouteIcon />],
  ["Receipts", <Receipt />],
  ["Payments", <CreditCard size={40} strokeWidth={1.6} />],
  ["Documents", <Doc />],
  ["Dashboard", <LayoutDashboard size={40} strokeWidth={1.6} />],
  ["Reports", <Pie />],
  ["Activity", <Activity size={40} strokeWidth={1.6} />],
];

type CardData = { title: string; value: string; delta: string; icon: "dollar" | "percent" | "box"; rowStart?: boolean; link?: string };
const cards: CardData[] = [
  { title: "Total GMV", value: "6.44 M", delta: "4.42 M", icon: "dollar" },
  { title: "Total Payable", value: "5.52 M", delta: "3.80 M", icon: "dollar" },
  { title: "Rate Margin", value: "1.04 M", delta: "743 K", icon: "dollar" },
  { title: "Margin Percentage", value: "16.25", delta: "1.36", icon: "percent" },
  { title: "Loads Count", value: "1,234", delta: "745", icon: "box", link: "View Trips" },
  { title: "Carrier RPM", value: "2.92", delta: "1.34", icon: "dollar", rowStart: true },
];

const metrics = ["Loads Count", "Avg GMV", "Avg Payable", "Total GMV", "Total Payable", "Rate Margin", "Margin Percentage", "Carrier RPM"];
const scale = ["#e8e4f6", "#d2d4f3", "#b6c0ee", "#9facec", "#8499e9", "#6884e7", "#4b70e2", "#2f60e4", "#1c4be0"];

const MetricCard = ({ title, value, delta, icon, rowStart, link }: CardData) => (
  <Card $rowStart={rowStart}>
    <Metric>
      <CardTitle>{title}</CardTitle>
      <Value $gap={icon === "percent" ? 0 : 14}>
        {icon === "dollar" && <DollarSign size={38} strokeWidth={2} />}
        {icon === "box" && <Box size={40} strokeWidth={2} />}
        {value}
        {icon === "percent" && <Percent size={42} strokeWidth={1.8} />}
      </Value>
      <Delta>
        <TrendIcon size={38} strokeWidth={2.4} />
        <Plus size={32} strokeWidth={3} />
        {delta}
      </Delta>
    </Metric>
    {link && <TripsLink href="#trips">{link}</TripsLink>}
  </Card>
);

export default function App() {
  const [metric, setMetric] = useState("Avg Payable");
  const [side, setSide] = useState("Delivery");

  return (
    <>
      <GlobalStyle />
      <Page>
        <Sidebar aria-label="Main">
          <MenuButton aria-label="Open menu">
            <Menu size={40} color="#fff" />
          </MenuButton>
          {nav.map(([label, icon]) => (
            <NavLink key={label} href={`#${label.toLowerCase()}`} aria-label={label} $active={label === "Dashboard"}>
              {icon}
            </NavLink>
          ))}
        </Sidebar>
        <Body>
          <Header>
            <Brand href="#home">
              <Logo />
              Ten4 Intelligence
            </Brand>
            <HeaderTools>
              <HelpLink href="#help">Help</HelpLink>
              <Divider />
              <SearchToggle aria-label="Search">
                <Dots>
                  <Dot />
                  <Dot />
                </Dots>
                <Thumb>
                  <Search size={28} strokeWidth={2} />
                </Thumb>
              </SearchToggle>
              <Divider />
              <ThemeToggle>
                <HiddenInput type="checkbox" aria-label="Dark theme" />
                <Thumb>
                  <Sun size={24} strokeWidth={2.2} />
                </Thumb>
              </ThemeToggle>
              <Divider />
              <AccountButton aria-label="Account">
                <CircleUserRound size={42} strokeWidth={2} />
              </AccountButton>
            </HeaderTools>
          </Header>
          <Main>
            <Heading>
              <Titles>
                <Crumb>Analytics</Crumb>
                <Title>Dashboard</Title>
              </Titles>
              <Filters>
                {["Assignee", "Office", "Customer", "Carrier"].map((name) => (
                  <FilterButton key={name}>{name}</FilterButton>
                ))}
                <DateButton $solid>
                  <CalendarIcon />
                  <span>04/01</span>
                  <span>-</span>
                  <span>06/30</span>
                </DateButton>
                <BookingButton $solid>By Booking</BookingButton>
                <ResetButton aria-label="Reset filters">
                  <RotateCcw size={28} strokeWidth={2} />
                </ResetButton>
                <PercentButton aria-label="Show percentages">
                  <Percent size={32} strokeWidth={1.8} />
                </PercentButton>
              </Filters>
            </Heading>
            <Content>
              <Cards>
                {cards.map((card) => (
                  <MetricCard key={card.title} {...card} />
                ))}
              </Cards>
              <MapPanel>
                <MapControls>
                  <Pills>
                    {metrics.map((name) => (
                      <Pill key={name} $on={name === metric} aria-pressed={name === metric} onClick={() => setMetric(name)}>
                        {name}
                      </Pill>
                    ))}
                  </Pills>
                  <Segmented aria-label="Stop type">
                    {["Pickup", "Delivery"].map((name) => (
                      <Segment key={name} $on={name === side}>
                        <HiddenInput type="radio" name="side" checked={name === side} onChange={() => setSide(name)} />
                        {name}
                      </Segment>
                    ))}
                  </Segmented>
                </MapControls>
                <Legend>
                  <span>$ 2,223</span>
                  <Swatches>
                    {scale.map((color) => (
                      <Swatch key={color} $color={color} />
                    ))}
                  </Swatches>
                  <span>$ 9,388</span>
                </Legend>
                <UsMap />
              </MapPanel>
            </Content>
          </Main>
        </Body>
      </Page>
    </>
  );
}
